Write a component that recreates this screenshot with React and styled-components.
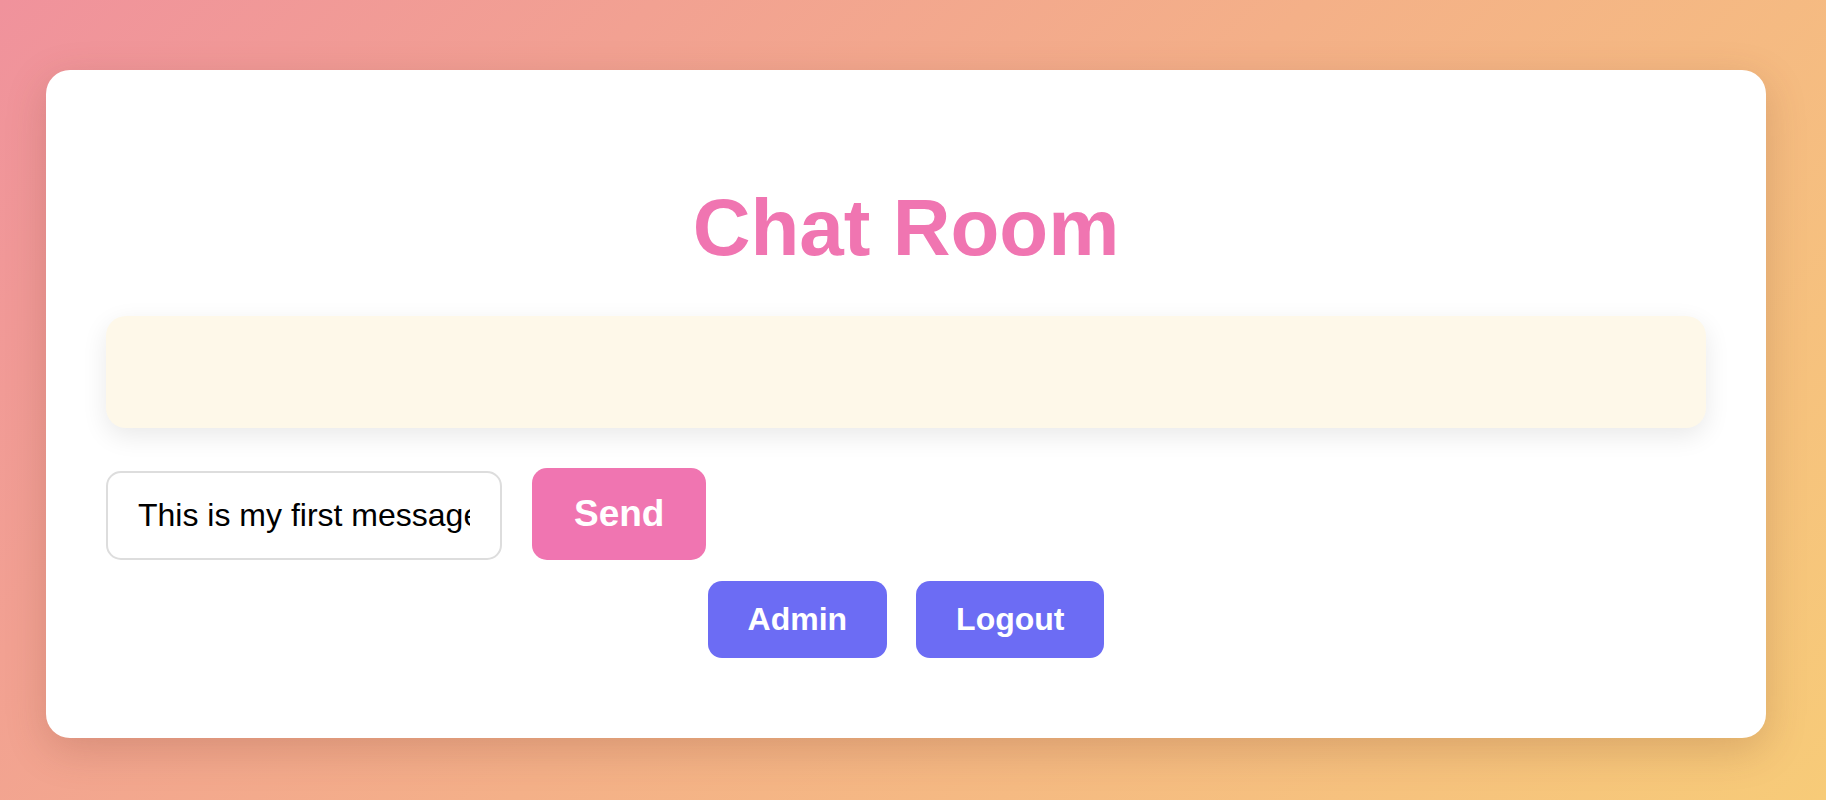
import React from 'react'
import styled, { createGlobalStyle } from 'styled-components';

const GlobalStyle = createGlobalStyle`
    html, body{
        margin: 0;
        padding: 0;
    }
    body{
        font-family: "Liberation Sans", Arial, Helvetica, sans-serif;
        background: linear-gradient(135deg, #f0929c 0%, #f4b088 50%, #f7cb78 100%);
        min-height: 800px;
    }
`

const Page = styled.div`
    box-sizing: border-box;
    min-height: 800px;
    padding: 70px 60px 62px 46px;
`

const Card = styled.div`
    background: #ffffff;
    border-radius: 24px;
    padding: 60px;
    box-shadow: 0 12px 40px rgba(120, 60, 40, 0.22);
`

const Title = styled.h1`
    margin: 52px 0 42px;
    text-align: center;
    font-size: 80px;
    font-weight: 700;
    color: #f075b1;
`

const Messages = styled.div`
    box-sizing: border-box;
    height: 112px;
    padding: 20px;
    background: #fef8e9;
    border-radius: 20px;
    box-shadow: 0 8px 26px rgba(0, 0, 0, 0.09);
`

const InputRow = styled.form`
    display: flex;
    align-items: baseline;
    gap: 30px;
    margin-top: 40px;
`

const TextInput = styled.input`
    box-sizing: border-box;
    width: 396px;
    padding: 24px 30px;
    border: 2px solid #dddddd;
    border-radius: 15px;
    font-family: "Liberation Sans", Arial, sans-serif;
    font-size: 32px;
    color: #000;
    background: #fff;
    outline: none;
`

const Button = styled.button`
    border: none;
    color: #ffffff;
    font-family: "Liberation Sans", Arial, sans-serif;
    font-weight: 700;
    cursor: pointer;
    background: ${({ variant }) => variant === 'pink' ? '#f075b1' : '#6c6cf4'};
    font-size: ${({ big }) => big ? '37px' : '32px'};
    padding: ${({ big }) => big ? '25px 42px' : '20px 40px'};
    border-radius: ${({ big }) => big ? '15px' : '14px'};
`

const Actions = styled.div`
    display: flex;
    justify-content: center;
    gap: 29px;
    margin: 21px 0 20px;
`

const App = () => {
    return (
        <>
            <GlobalStyle />
            <Page>
                <Card>
                    <Title>Chat Room</Title>
                    <Messages />
                    <InputRow onSubmit={e => e.preventDefault()}>
                        <TextInput type="text" defaultValue="This is my first message" />
                        <Button big variant="pink" type="submit">Send</Button>
                    </InputRow>
                    <Actions>
                        <Button type="button">Admin</Button>
                        <Button type="button">Logout</Button>
                    </Actions>
                </Card>
            </Page>
        </>
    );
}

export default App;
